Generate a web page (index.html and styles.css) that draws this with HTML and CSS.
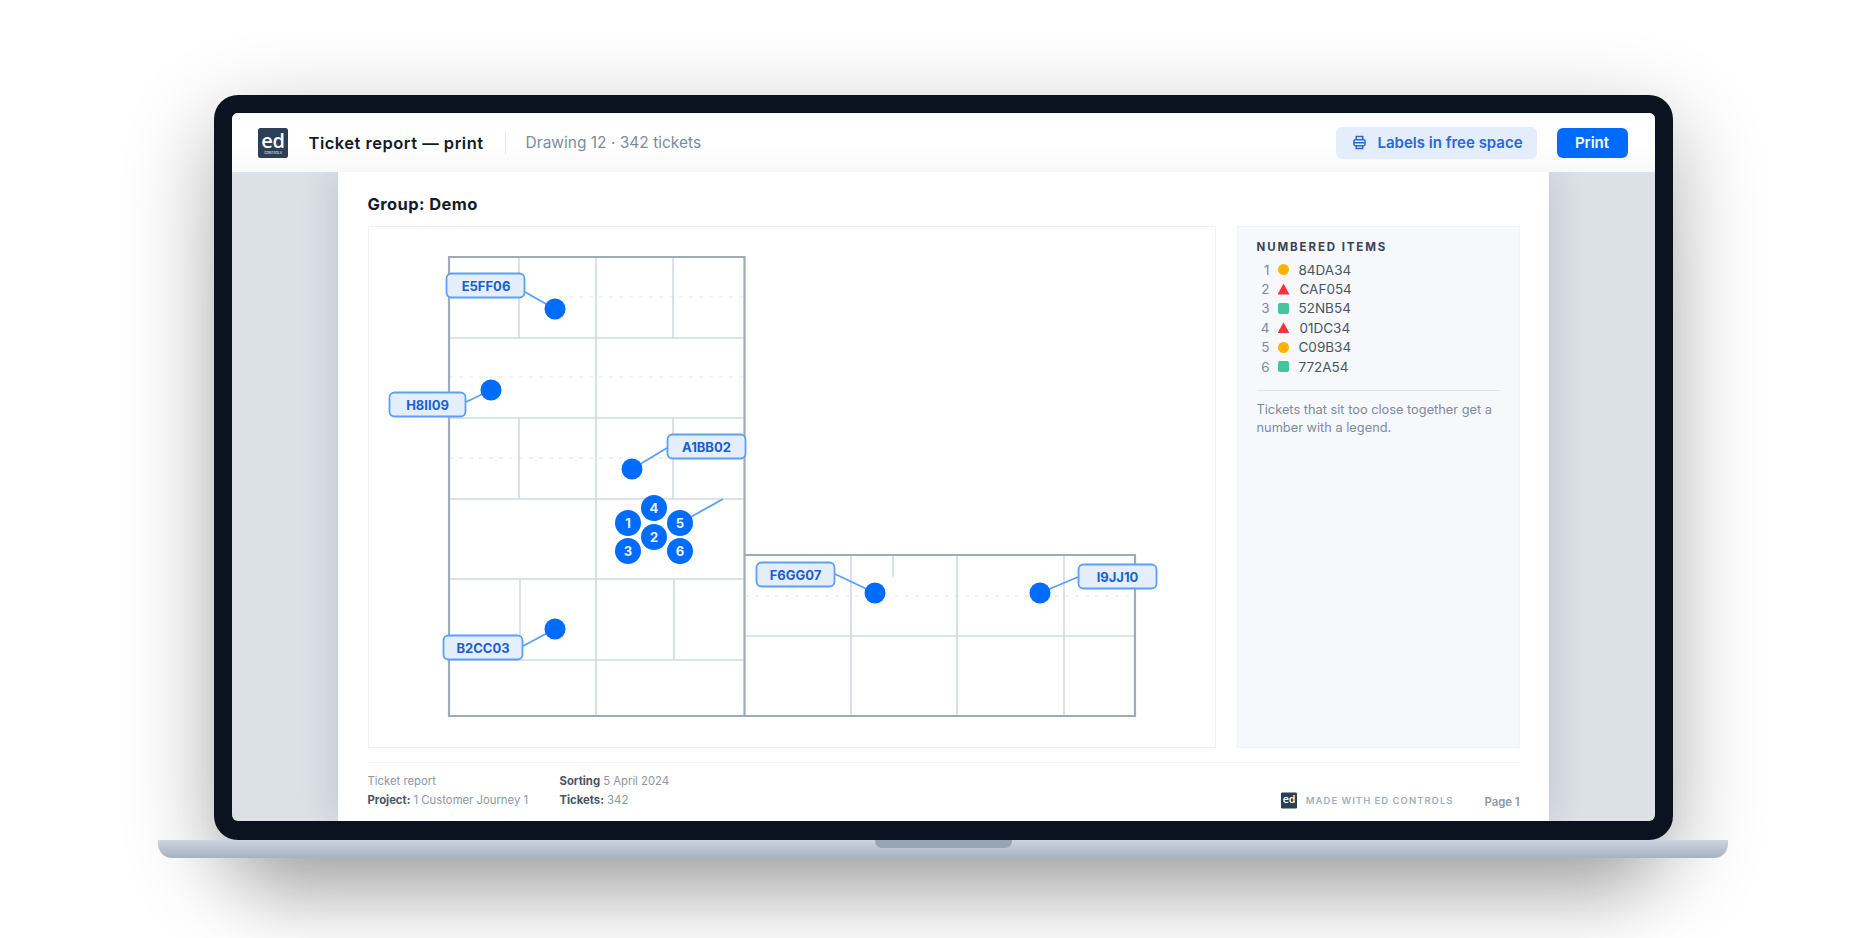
FILE: index.html
```html
<!DOCTYPE html>
<html lang="en">

<head>
    <meta charset="UTF-8">
    <meta name="viewport" content="width=device-width, initial-scale=1.0">
    <title>Ticket report - print</title>
    <link rel="stylesheet" href="styles.css">
</head>

<body>
    <div class="stage">
        <div class="frame">
            <div class="screen">
                <div class="toolbar">
                    <svg class="logo" viewBox="0 0 30 30">
                        <rect width="30" height="30" rx="2.5" fill="#2b4057" />
                        <text class="logo-ed" x="15" y="20">ed</text>
                        <text class="logo-small" x="15" y="25.5">CONTROLS</text>
                    </svg>
                    <div class="title">Ticket report — print</div>
                    <div class="subtitle">Drawing 12 · 342 tickets</div>
                    <button class="btn-soft">
                        <svg class="print-icon" viewBox="0 0 14 16">
                            <path d="M3.5 5V1.5h7V5" />
                            <rect x="1" y="5" width="12" height="6.5" rx="1.5" />
                            <path d="M1 8.2h12" />
                            <path d="M3.5 11.5v3h7v-3" />
                        </svg>
                        Labels in free space
                    </button>
                    <button class="btn-print">Print</button>
                </div>
                <div class="canvas">
                    <div class="sheet">
                        <h2>Group: Demo</h2>
                        <div class="report-row">
                            <div class="plan">
                                <svg viewBox="368 226 848 522" width="848" height="522">
                                    <!-- dashed centre lines -->
                                    <path class="dash" d="M449 297H744M449 377H744M449 458H744M745 596H1135" />
                                    <!-- inner walls -->
                                    <path class="wall"
                                        d="M519 257V338M596 257V716M673 257V338M519 418V499M673 418V499M520 579V660M674 579V660M449 338H744M449 418H744M449 499H744M449 579H744M449 660H744M745 636H1135M851 555V716M957 555V716M1064 555V716M893 555V577" />
                                    <!-- outer walls -->
                                    <path class="outer" d="M449 257H744.5V716H449ZM744.5 555H1135V716H744.5" />

                                    <path class="lead"
                                        d="M525 292L555 309M466 402L491 390M667 448L632 469M523 646L555 629M835 574L875 593M1078 577L1040 593M680 523L723 499" />

                                    <circle class="pin" cx="555" cy="309" r="10.5" />
                                    <circle class="pin" cx="491" cy="390" r="10.5" />
                                    <circle class="pin" cx="632" cy="469" r="10.5" />
                                    <circle class="pin" cx="555" cy="629" r="10.5" />
                                    <circle class="pin" cx="875" cy="593" r="10.5" />
                                    <circle class="pin" cx="1040" cy="593" r="10.5" />

                                    <g class="cluster">
                                        <circle class="pin" cx="628" cy="523" r="13" /><text x="628" y="527.5">1</text>
                                        <circle class="pin" cx="654" cy="508" r="13" /><text x="654" y="512.5">4</text>
                                        <circle class="pin" cx="680" cy="523" r="13" /><text x="680" y="527.5">5</text>
                                        <circle class="pin" cx="654" cy="537" r="13" /><text x="654" y="541.5">2</text>
                                        <circle class="pin" cx="628" cy="551" r="13" /><text x="628" y="555.5">3</text>
                                        <circle class="pin" cx="680" cy="551" r="13" /><text x="680" y="555.5">6</text>
                                    </g>

                                    <g class="tag">
                                        <rect x="446.5" y="273.5" width="78" height="24" rx="5" /><text x="486" y="290.5">E5FF06</text>
                                        <rect x="389.5" y="392.5" width="76" height="24" rx="5" /><text x="427.5" y="409.5">H8II09</text>
                                        <rect x="667.5" y="434.5" width="78" height="24" rx="5" /><text x="706.5" y="451.5">A1BB02</text>
                                        <rect x="443.5" y="635.5" width="79" height="24" rx="5" /><text x="483" y="652.5">B2CC03</text>
                                        <rect x="756.5" y="562.5" width="78" height="24" rx="5" /><text x="795.5" y="579.5">F6GG07</text>
                                        <rect x="1078.5" y="564.5" width="78" height="24" rx="5" /><text x="1117.5" y="581.5">I9JJ10</text>
                                    </g>
                                </svg>
                            </div>
                            <div class="legend">
                                <h3>NUMBERED ITEMS</h3>
                                <ul class="items">
                                    <li><span class="num">1</span><span class="mark dot"></span>84DA34</li>
                                    <li><span class="num">2</span><span class="mark tri"></span>CAF054</li>
                                    <li><span class="num">3</span><span class="mark square"></span>52NB54</li>
                                    <li><span class="num">4</span><span class="mark tri"></span>01DC34</li>
                                    <li><span class="num">5</span><span class="mark dot"></span>C09B34</li>
                                    <li><span class="num">6</span><span class="mark square"></span>772A54</li>
                                </ul>
                                <p class="note">Tickets that sit too close together get a number with a legend.</p>
                            </div>
                        </div>
                        <div class="report-foot">
                            <div class="foot-col">
                                <div>Ticket report</div>
                                <div><b>Project:</b> 1 Customer Journey 1</div>
                            </div>
                            <div class="foot-col">
                                <div><b>Sorting</b> 5 April 2024</div>
                                <div><b>Tickets:</b> 342</div>
                            </div>
                            <div class="brand">
                                <svg class="logo-mini" viewBox="0 0 30 30">
                                    <rect width="30" height="30" rx="2.5" fill="#2b4057" />
                                    <text class="logo-ed" x="15" y="20">ed</text>
                                </svg>
                                MADE WITH ED CONTROLS
                            </div>
                            <div class="page-no">Page 1</div>
                        </div>
                    </div>
                </div>
            </div>
        </div>
        <div class="base">
            <div class="notch"></div>
        </div>
    </div>
</body>

</html>
```

FILE: styles.css
```css
body {
    margin: 0;
    height: 938px;
    overflow: hidden;
    background-color: #fff;
    font-family: Inter, "Liberation Sans", sans-serif;
    color: #141b26;
}

.stage {
    display: flex;
    flex-direction: column;
    align-items: center;
    width: 1570px;
    padding: 95px 0 0 158px;
}

.frame {
    width: 1423px;
    height: 708px;
    padding: 18px 18px 19px 18px;
    background-color: #0c1320;
    border-radius: 24px;
    box-shadow: 0 30px 90px rgba(0, 0, 0, 0.32), 0 100px 70px -40px rgba(0, 0, 0, 0.16);
}

.screen {
    display: flex;
    flex-direction: column;
    height: 100%;
    border-radius: 6px;
    overflow: hidden;
    background-color: #dce1e8;
}

.toolbar {
    display: flex;
    align-items: center;
    flex-shrink: 0;
    height: 59px;
    padding: 0 27px 0 26px;
    box-sizing: border-box;
    background: linear-gradient(#fff 55%, #f8f8f9);
    position: relative;
    z-index: 1;
}

.logo {
    width: 30px;
    height: 30px;
    margin-right: 21px;
}

.logo-ed {
    fill: #fff;
    font-family: "Open Sans", sans-serif;
    font-size: 20px;
    font-weight: 600;
    letter-spacing: -0.3px;
    text-anchor: middle;
}

.logo-small {
    fill: #c8d2dc;
    font-size: 3.2px;
    font-weight: 600;
    text-anchor: middle;
}

.title {
    font-size: 16.5px;
    font-weight: 600;
    letter-spacing: 0.5px;
    padding-right: 21px;
    line-height: 22px;
    border-right: 1px solid #e6e9ee;
}

.subtitle {
    font-size: 15.5px;
    color: #7f8b9c;
    margin-left: 20px;
    margin-right: auto;
}

button {
    font-family: inherit;
    font-weight: 600;
    font-size: 15px;
    border: none;
    border-radius: 6px;
    cursor: pointer;
}

.btn-soft {
    display: flex;
    align-items: center;
    gap: 12px;
    width: 201px;
    height: 32px;
    padding: 0 0 0 17px;
    margin-right: 20px;
    background-color: #e4edfb;
    color: #2a68d8;
}

.print-icon {
    width: 13px;
    height: 15px;
    fill: none;
    stroke: #2a68d8;
    stroke-width: 1.6;
}

.btn-print {
    width: 71px;
    height: 30px;
    background-color: #006bff;
    color: #fff;
}

.canvas {
    flex: 1;
    display: flex;
    justify-content: center;
    min-height: 0;
}

.sheet {
    width: 1152px;
    padding: 0 29px 0 30px;
    background-color: #fff;
    box-shadow: 0 0 36px rgba(20, 30, 50, 0.16);
}

h2 {
    margin: 0;
    height: 54px;
    line-height: 64px;
    font-size: 16.5px;
    font-weight: 700;
    letter-spacing: 0.4px;
}

.report-row {
    display: flex;
    gap: 21px;
    height: 522px;
}

.plan {
    width: 848px;
    height: 522px;
    box-shadow: inset 0 0 0 1px #eef1f7;
}

.plan svg {
    display: block;
}

.dash {
    fill: none;
    stroke: #e2e6ec;
    stroke-width: 1.2;
    stroke-dasharray: 4 6;
}

.wall {
    fill: none;
    stroke: #d3d9e2;
    stroke-width: 1.6;
}

.outer {
    fill: none;
    stroke: #a1abb8;
    stroke-width: 2.2;
}

.lead {
    fill: none;
    stroke: #5aa0f5;
    stroke-width: 1.8;
}

.pin {
    fill: #006bff;
}

.cluster text {
    fill: #eaf2ff;
    font-size: 13px;
    font-weight: 700;
    text-anchor: middle;
}

.tag rect {
    fill: #e4eefc;
    stroke: #5aa0f5;
    stroke-width: 1.8;
}

.tag text {
    fill: #1a5fd0;
    font-size: 13px;
    font-weight: 700;
    text-anchor: middle;
}

.legend {
    flex: 1;
    box-sizing: border-box;
    padding: 14px 20px 0 20px;
    background-color: #f6f8fc;
    box-shadow: inset 0 0 0 1px #f0f3fa;
}

h3 {
    margin: 0 0 6px 0;
    font-size: 11.5px;
    font-weight: 700;
    line-height: 14px;
    letter-spacing: 1.9px;
    color: #3a4454;
}

.items {
    list-style: none;
    margin: 0;
    padding: 0 0 14px 0;
    border-bottom: 1px solid #dfe3ea;
}

.items li {
    display: flex;
    align-items: center;
    height: 19.4px;
    font-size: 13.5px;
    color: #4a5463;
}

.num {
    width: 13px;
    text-align: right;
    margin-right: 8px;
    color: #7f8b9c;
}

.mark {
    width: 11px;
    height: 11px;
    margin-right: 10px;
}

.dot {
    border-radius: 50%;
    background-color: #ffb300;
}

.square {
    border-radius: 2px;
    background-color: #43c59a;
}

.tri {
    width: 12px;
    background-color: #f5333f;
    clip-path: polygon(50% 0, 100% 100%, 0 100%);
}

.note {
    margin: 10px 0 0 0;
    font-size: 12.8px;
    line-height: 18px;
    color: #7f8b9c;
}

.report-foot {
    display: flex;
    align-items: flex-start;
    margin-top: 14px;
    padding-top: 9px;
    border-top: 1px solid #f1f3f8;
    font-size: 11.3px;
    line-height: 19px;
    color: #8b96a5;
}

.foot-col {
    width: 192px;
}

.foot-col b {
    font-weight: 700;
    color: #4a5463;
}

.brand {
    display: flex;
    align-items: center;
    gap: 9px;
    margin: 19px 0 0 auto;
    font-size: 9.5px;
    line-height: 19px;
    font-weight: 600;
    letter-spacing: 1px;
    color: #a4aebb;
}

.logo-mini {
    width: 16px;
    height: 17px;
}

.page-no {
    margin: 21px 0 0 31px;
    font-weight: 600;
    color: #8b96a5;
}

.base {
    position: relative;
    flex-shrink: 0;
    width: 1570px;
    height: 18px;
    border-radius: 0 0 14px 14px;
    background: linear-gradient(#ccd4df, #a6b1c0);
}

.notch {
    width: 137px;
    height: 8px;
    margin: 0 auto;
    border-radius: 0 0 7px 7px;
    background-color: #99a4b2;
}
```
